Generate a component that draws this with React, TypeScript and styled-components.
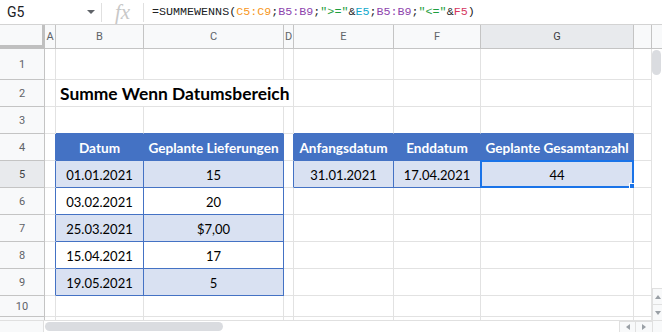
import React from 'react'
import styled, { createGlobalStyle } from 'styled-components'

const BLUE = '#4472c4'
const LIGHT = '#d9e1f2'
const GRID = '#e2e2e2'
const HEAD_LINE = '#c4c4c4'

const GlobalStyle = createGlobalStyle`
  html, body {
    margin: 0;
    padding: 0;
    background: #fff;
  }
  body {
    font-family: Roboto, Arial, sans-serif;
  }
  * {
    box-sizing: border-box;
  }
`

const Frame = styled.div`
  width: 662px;
  height: 332px;
  overflow: hidden;
  background: #fff;
`

const FormulaBar = styled.div`
  display: flex;
  align-items: center;
  height: 25px;
  border-bottom: 1px solid #d3d3d3;
`

const NameBox = styled.div`
  width: 101px;
  height: 100%;
  display: flex;
  align-items: center;
  justify-content: space-between;
  padding: 0 6px 0 7px;
  font: 14px Roboto, Arial, sans-serif;
  color: #202124;
`

const Caret = styled.span`
  width: 0;
  height: 0;
  border-left: 4px solid transparent;
  border-right: 4px solid transparent;
  border-top: 4px solid #5f6368;
`

const Divider = styled.div`
  width: 1px;
  height: 19px;
  background: #e0e0e0;
`

const FxBox = styled.div`
  width: 41px;
  text-align: center;
  font: italic 21px 'Liberation Serif', serif;
  color: #c8c8c8;
  line-height: 24px;
`

const Formula = styled.div`
  padding-left: 8px;
  font: 11.7px 'Liberation Mono', monospace;
  color: #202124;
  white-space: pre;
`

const Tok = styled.span<{ $c: string }>`
  color: ${p => p.$c};
`

const Body = styled.div`
  display: flex;
  height: 295px;
`

const Sheet = styled.div`
  display: grid;
  grid-template-columns: 45px 11px 88px 140px 10px 100px 87px 153px 18px;
  grid-template-rows: 24px 31px repeat(8, 27px) 21px 21px;
  width: 652px;
  height: 295px;
  overflow: hidden;
`

const Corner = styled.div`
  background: #f8f9fa;
  border-right: 3px solid #c0c0c0;
  border-bottom: 4px solid #c0c0c0;
`

const Head = styled.div<{ $active?: boolean }>`
  display: flex;
  align-items: center;
  justify-content: center;
  background: ${p => (p.$active ? '#e8eaed' : '#f8f9fa')};
  border-right: 1px solid ${HEAD_LINE};
  border-bottom: 1px solid ${HEAD_LINE};
  font: 11px Roboto, Arial, sans-serif;
  color: ${p => (p.$active ? '#3c4043' : '#5f6368')};
`

const Cell = styled.div<{ $bg: string; $r: string; $b: string; $head?: boolean }>`
  position: relative;
  display: flex;
  align-items: flex-end;
  justify-content: center;
  padding: 0 3px 4px;
  background: ${p => p.$bg};
  border-right: 1px solid ${p => p.$r};
  border-bottom: 1px solid ${p => p.$b};
  font: ${p => (p.$head ? '700 13.6px' : '400 13px')} Lato, sans-serif;
  color: ${p => (p.$head ? '#fff' : '#000')};
  white-space: nowrap;
`

const Title = styled.div`
  grid-column: span 3;
  display: flex;
  align-items: center;
  padding: 1px 4px 0;
  background: #fff;
  border-right: 1px solid ${GRID};
  border-bottom: 1px solid ${GRID};
  font: 700 17.4px Lato, sans-serif;
  color: #000;
  white-space: nowrap;
`

const Selection = styled.div`
  position: absolute;
  top: -1px;
  left: -1px;
  right: -1px;
  bottom: -1px;
  border: 2px solid #1a73e8;
  pointer-events: none;
`

const Handle = styled.div`
  position: absolute;
  right: -4px;
  bottom: -4px;
  width: 7px;
  height: 7px;
  background: #1a73e8;
  border: 1px solid #fff;
`

const VScroll = styled.div`
  width: 10px;
  display: flex;
  flex-direction: column;
`

const VScrollHead = styled.div`
  height: 24px;
  background: #f8f9fa;
  border-bottom: 1px solid ${HEAD_LINE};
`

const VTrack = styled.div`
  flex: 1;
  padding-top: 1px;
`

const Thumb = styled.div<{ $w: number; $h: number }>`
  width: ${p => p.$w}px;
  height: ${p => p.$h}px;
  background: #dadce0;
  border-radius: 5px;
`

const ArrowBox = styled.div<{ $w: number; $h: number }>`
  width: ${p => p.$w}px;
  height: ${p => p.$h}px;
  display: flex;
  align-items: center;
  justify-content: center;
  background: #f8f9fa;
  border-top: 1px solid #e0e0e0;
  border-left: 1px solid #e0e0e0;
`

const Tri = styled.span<{ $dir: 'up' | 'down' | 'left' | 'right' }>`
  width: 0;
  height: 0;
  border: 3px solid transparent;
  ${p => p.$dir === 'up' && 'border-bottom: 4px solid #9aa0a6; border-top-width: 0;'}
  ${p => p.$dir === 'down' && 'border-top: 4px solid #9aa0a6; border-bottom-width: 0;'}
  ${p => p.$dir === 'left' && 'border-right: 4px solid #9aa0a6; border-left-width: 0;'}
  ${p => p.$dir === 'right' && 'border-left: 4px solid #9aa0a6; border-right-width: 0;'}
`

const HScroll = styled.div`
  display: flex;
  height: 12px;
  border-top: 1px solid #e0e0e0;
`

const HScrollLeft = styled.div`
  width: 44px;
  background: #f8f9fa;
  border-right: 1px solid #e0e0e0;
`

const HTrack = styled.div`
  flex: 1;
  padding: 1px 0 0 1px;
`

const HCorner = styled.div`
  width: 10px;
  background: #f8f9fa;
  border-left: 1px solid #e0e0e0;
`

const COLS = ['A', 'B', 'C', 'D', 'E', 'F', 'G', 'H']
const ROWS = [1, 2, 3, 4, 5, 6, 7, 8, 9, 10, 11]

const VALUES: Record<string, string> = {
  B4: 'Datum', C4: 'Geplante Lieferungen',
  E4: 'Anfangsdatum', F4: 'Enddatum', G4: 'Geplante Gesamtanzahl',
  B5: '01.01.2021', C5: '15', E5: '31.01.2021', F5: '17.04.2021', G5: '44',
  B6: '03.02.2021', C6: '20',
  B7: '25.03.2021', C7: '$7,00',
  B8: '15.04.2021', C8: '17',
  B9: '19.05.2021', C9: '5',
}

const inTable = (r: number, c: number) =>
  (r >= 4 && r <= 9 && c >= 1 && c <= 2) || (r >= 4 && r <= 5 && c >= 4 && c <= 6)

const isLight = (r: number, c: number) =>
  inTable(r, c) && (c <= 2 ? r % 2 === 1 : r === 5)

const ORANGE = '#f7981d'
const PURPLE = '#8e44ad'
const GREEN = '#1e9e3e'
const CYAN = '#11a9cc'
const RED = '#d5365e'

const App: React.FC = () => {
  const renderCell = (r: number, c: number) => {
    const key = `${COLS[c]}${r}`
    const t = inTable(r, c)
    const head = t && r === 4
    const bg = head ? BLUE : isLight(r, c) ? LIGHT : '#fff'
    const right = t || inTable(r, c + 1) ? BLUE : GRID
    const bottom = t || inTable(r + 1, c) ? BLUE : GRID
    return (
      <Cell key={key} $bg={bg} $r={right} $b={bottom} $head={head}>
        {VALUES[key]}
        {key === 'G5' && (
          <Selection>
            <Handle />
          </Selection>
        )}
      </Cell>
    )
  }

  return (
    <Frame>
      <GlobalStyle />
      <FormulaBar>
        <NameBox>
          G5
          <Caret />
        </NameBox>
        <Divider />
        <FxBox>fx</FxBox>
        <Divider />
        <Formula>
          =SUMMEWENNS(<Tok $c={ORANGE}>C5:C9</Tok>;<Tok $c={PURPLE}>B5:B9</Tok>;
          <Tok $c={GREEN}>"&gt;="</Tok>&amp;<Tok $c={CYAN}>E5</Tok>;
          <Tok $c={PURPLE}>B5:B9</Tok>;<Tok $c={GREEN}>"&lt;="</Tok>&amp;
          <Tok $c={RED}>F5</Tok>)
        </Formula>
      </FormulaBar>
      <Body>
        <Sheet>
          <Corner />
          {COLS.map(col => (
            <Head key={col} $active={col === 'G'}>{col === 'H' ? '' : col}</Head>
          ))}
          {ROWS.map(r => (
            <React.Fragment key={r}>
              <Head $active={r === 5}>{r <= 10 ? r : ''}</Head>
              {r === 2 ? (
                <>
                  {renderCell(2, 0)}
                  <Title>Summe Wenn Datumsbereich</Title>
                  {[4, 5, 6, 7].map(c => renderCell(2, c))}
                </>
              ) : (
                COLS.map((_, c) => renderCell(r, c))
              )}
            </React.Fragment>
          ))}
        </Sheet>
        <VScroll>
          <VScrollHead />
          <VTrack>
            <Thumb $w={9} $h={25} />
          </VTrack>
          <ArrowBox $w={10} $h={16}>
            <Tri $dir='up' />
          </ArrowBox>
          <ArrowBox $w={10} $h={16}>
            <Tri $dir='down' />
          </ArrowBox>
        </VScroll>
      </Body>
      <HScroll>
        <HScrollLeft />
        <HTrack>
          <Thumb $w={178} $h={9} />
        </HTrack>
        <ArrowBox $w={16} $h={11}>
          <Tri $dir='left' />
        </ArrowBox>
        <ArrowBox $w={17} $h={11}>
          <Tri $dir='right' />
        </ArrowBox>
        <HCorner />
      </HScroll>
    </Frame>
  )
}

export default App
